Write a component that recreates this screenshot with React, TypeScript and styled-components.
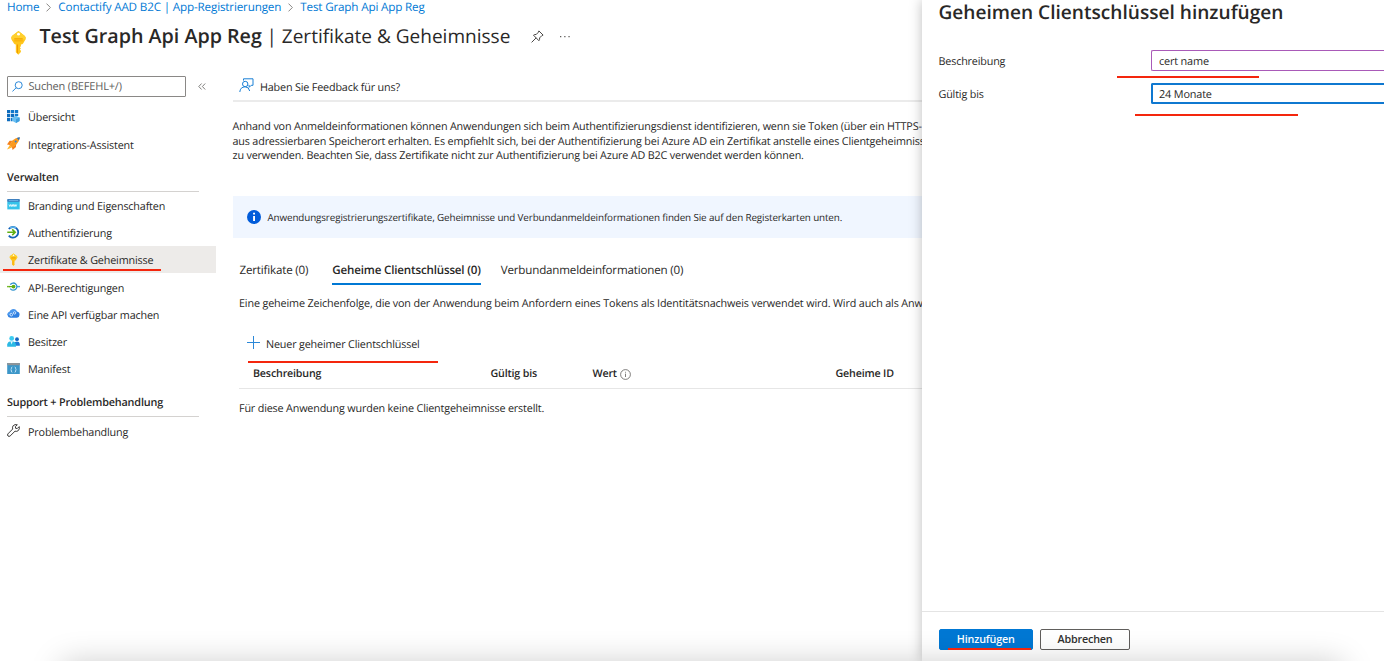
import React from "react";
import styled, { createGlobalStyle, css } from "styled-components";

const Global = createGlobalStyle`
  * { box-sizing: border-box; }
  html, body { margin: 0; height: 100%; overflow: hidden; background: #fff; }
  body {
    font-family: "Open Sans", "Noto Sans", sans-serif;
    font-size: 10.8px;
    letter-spacing: -0.175px;
    color: #292827;
    text-rendering: geometricPrecision;
  }
  svg { display: block; flex: none; }
`;

const Page = styled.div`
  position: relative;
  height: 661px;
  display: grid;
  grid-template-columns: minmax(0, 1fr) 462px;
  overflow: hidden;
`;
const Blade = styled.div`
  min-width: 0;
  overflow: hidden;
  white-space: nowrap;
`;
const Crumbs = styled.nav`
  display: flex;
  align-items: center;
  height: 15px;
  padding: 0 0 1px 7px;
  font-size: 11.7px;
  color: #0078d4;
`;
const Chevron = styled.svg`
  margin: 1px 7px 0 7px;
`;
const TitleBar = styled.header`
  display: flex;
  align-items: center;
  height: 61px;
  padding: 0 0 19px 8px;
`;
const KeySlot = styled.div`
  padding-top: 12px;
`;
const Title = styled.h1`
  margin: 0 0 0 10.5px;
  display: flex;
  align-items: baseline;
  font-size: 19.7px;
  letter-spacing: 0;
  font-weight: 600;
  line-height: 26px;
`;
const Subtitle = styled.span`
  margin-left: 4.5px;
  font-size: 19.05px;
  font-weight: 400;
`;
const TitleIcons = styled.div`
  display: flex;
  align-items: center;
  gap: 15px;
  margin-left: 21px;
`;
const Columns = styled.div`
  display: flex;
  gap: 17px;
`;
const Sidebar = styled.aside`
  width: 215.5px;
  flex: none;
`;
const SearchRow = styled.div`
  display: flex;
  align-items: center;
  gap: 12px;
  height: 27px;
  padding: 0 0 6.5px 7px;
`;
const SearchBox = styled.div`
  display: flex;
  align-items: center;
  gap: 5.5px;
  width: 179px;
  height: 20.5px;
  padding: 1px 0 0 4px;
  border: 1px solid #8a8886;
  border-radius: 1px;
  color: #605e5c;
  font-size: 11px;

  svg { margin-bottom: 1.5px; }
`;
const NavItem = styled.a<{ $active?: boolean }>`
  position: relative;
  display: flex;
  align-items: center;
  gap: 8px;
  height: 27.25px;
  padding: 2.3px 0 0 7px;
  ${(p) => p.$active && css`background: #edebe9;`}

  svg { margin-bottom: 2.6px; }
`;
const NavHeading = styled.h2`
  display: flex;
  align-items: flex-end;
  margin: 0 17px 0 7px;
  height: 34px;
  padding-bottom: 6px;
  border-bottom: 1px solid #d4d2d0;
  font-size: 10.85px;
  line-height: 14px;
  font-weight: 600;

  &:nth-of-type(2) { margin-top: 1.2px; }
`;
const Main = styled.main`
  flex: 1;
  min-width: 0;
`;
const CommandBar = styled.div`
  display: flex;
  align-items: flex-start;
  gap: 6px;
  height: 26px;
  padding: 2px 0 0 6.5px;
  border-bottom: 2px solid #ebebeb;
  line-height: 19px;
`;
const Intro = styled.p`
  margin: 18px 0 0;
  line-height: 14.5px;
`;
const Notice = styled.div`
  display: flex;
  align-items: center;
  gap: 7px;
  height: 42px;
  margin-top: 32.5px;
  padding-left: 14px;
  background: #f0f6ff;
  font-size: 9.85px;
  letter-spacing: -0.122px;
`;
const Tabs = styled.div`
  display: flex;
  margin: 21px 0 0 7px;
  height: 26px;
`;
const Tab = styled.div<{ $active?: boolean }>`
  height: 26px;
  font-size: 11.6px;
  line-height: 24px;
  margin-right: ${(p) => (p.$active ? "20px" : "24px")};
  border-bottom: 2px solid ${(p) => (p.$active ? "#0078d4" : "transparent")};
  font-weight: ${(p) => (p.$active ? 600 : 400)};
`;
const Description = styled.p`
  margin: 11px 0 0 6.5px;
  line-height: 15px;
  letter-spacing: -0.15px;
`;
const AddSecret = styled.div`
  position: relative;
  display: flex;
  align-items: center;
  gap: 6.5px;
  margin: 22px 0 0 14px;
  height: 22px;
  padding-top: 1.5px;

  svg { margin-bottom: 4px; }
`;
const TableHead = styled.div`
  display: grid;
  grid-template-columns: 237.5px 102px 243px 1fr;
  align-items: center;
  margin: 4px 0 0 6.5px;
  height: 30px;
  padding: 1px 0 0 14px;
  border-bottom: 1px solid #e6e6e6;
  font-size: 10.7px;
  font-weight: 600;
`;
const HeadCell = styled.span`
  display: flex;
  align-items: center;
  gap: 3.5px;
`;
const Empty = styled.p`
  margin: 12px 0 0 6.5px;
  line-height: 15px;
`;
const Panel = styled.section`
  position: relative;
  display: flex;
  flex-direction: column;
  background: #fff;
  box-shadow: 0 0 12px rgba(0, 0, 0, 0.26);
  white-space: nowrap;
`;
const PanelTitle = styled.h2`
  margin: 0 0 25px 16.5px;
  font-size: 19.1px;
  letter-spacing: 0;
  line-height: 25px;
  font-weight: 600;
`;
const Field = styled.div`
  position: relative;
  display: grid;
  grid-template-columns: 212.5px 1fr;
  align-items: center;
  margin: 0 0 12.2px 16.5px;
  height: 21px;
`;
const FieldLabel = styled.label`
  padding-top: 1.5px;
`;
const Input = styled.div<{ $focused?: boolean }>`
  display: flex;
  align-items: center;
  height: 21px;
  padding: 1.5px 0 0 ${(p) => (p.$focused ? "6px" : "7px")};
  border: ${(p) => (p.$focused ? "2px solid #0f78d0" : "1px solid #a95ab8")};
  border-right: 0;
  border-radius: 2px 0 0 2px;
  font-size: 10.9px;
`;
const PanelFooter = styled.footer`
  display: flex;
  gap: 7px;
  margin-top: auto;
  height: 50px;
  padding: 17px 0 0 16.5px;
  border-top: 1px solid #e4e4e4;
`;
const Button = styled.button<{ $primary?: boolean }>`
  position: relative;
  width: ${(p) => (p.$primary ? "94.5px" : "90px")};
  height: 21px;
  padding: 0 0 1px;
  border: 1px solid ${(p) => (p.$primary ? "#0078d4" : "#605e5c")};
  border-radius: 2px;
  background: ${(p) => (p.$primary ? "#0078d4" : "transparent")};
  color: ${(p) => (p.$primary ? "#fff" : "#323130")};
  font: 600 10.75px/18px "Open Sans", "Noto Sans", sans-serif;
  letter-spacing: -0.18px;
`;
/* hand-drawn emphasis line lying over the interface */
const Mark = styled.i<{ $x: number; $y: number; $w: number }>`
  position: absolute;
  z-index: 2;
  left: ${(p) => p.$x}px;
  top: ${(p) => p.$y}px;
  width: ${(p) => p.$w}px;
  height: 2px;
  background: #f4260d;
`;
const BottomShade = styled.div`
  position: absolute;
  left: 62px;
  right: 42px;
  top: 663px;
  height: 40px;
  box-shadow: 0 0 32px rgba(0, 0, 0, 0.21);
  pointer-events: none;
`;

const Key = ({ w, h }: { w: number; h: number }) => (
  <svg width={w} height={h} viewBox="0 0 16 26">
    <path d="M8 1 1.2 6.2Q-.2 8 1 10.3L3.3 14Q4 15 5.2 15V23.2L7.8 25.8 10.5 23V21.5L9.4 20.3 10.5 19.2 9.4 18 10.5 16.8V15Q12 15 12.8 14L15.2 10Q16 7.5 14.6 6.2Z" fill="#ffc61a" />
    <path d="M8 1 1.2 6.2Q-.2 8 1 10H15.2Q16 7.5 14.6 6.2Z" fill="#ffd02e" />
    <path d="M6.4 15H7.5V24.5L6.4 23.7Z" fill="#f09a00" />
    <path d="M3.6 8.6h8.8v1.2H3.6zM3.6 10.8h8.8v1H3.6z" fill="#f5a300" />
    <circle cx="8" cy="4.3" r="1.5" fill="#fff" />
  </svg>
);

const GridIcon = () => (
  <svg width="13" height="13" viewBox="0 0 13 13">
    <path d="M0 0h3.3v3.3H0zM0 4h3.3v3.3H0zM0 8h3.3v3.2H0zM4 4h3.3v3.3H4z" fill="#0f6cbd" />
    <path d="M4 0h3.3v3.3H4zM8 0h3.2v3.3H8zM8 4h3.2v2H8zM4 8h1.6v3.2H4z" fill="#1178cc" />
    <path d="M9 5.8 12.6 7.6V11L9 12.9 5.5 11V7.6Z" fill="#69bff2" />
    <path d="M9 9.3 12.6 7.6V11L9 12.9Z" fill="#3e9ede" />
  </svg>
);
const RocketIcon = () => (
  <svg width="13" height="13" viewBox="0 0 13 13">
    <path d="M5.4 3.8H2.6L0 7.4l3 .6ZM9 7.4v2.6L5.6 13l-.7-3Z" fill="#f4801b" />
    <path d="M2.7 8.2 0 12.6 4.9 10.4Z" fill="#ffb52b" />
    <path d="M12.8.2Q8.5.6 5.4 3.6L2.5 8.2 4.9 10.5 9.2 7.7Q12.5 4.5 12.8.2Z" fill="#fb9a1e" />
    <path d="M12.8.2Q11.3.3 9.8 1L12 3.2Q12.7 1.7 12.8.2Z" fill="#1f72c9" />
    <circle cx="8.7" cy="4.4" r="1" fill="#2f7dd0" />
  </svg>
);
const BrandIcon = () => (
  <svg width="13" height="13" viewBox="0 0 13 13">
    <path d="M.3 1.2h12.4v2.6H.3z" fill="#0f62b0" />
    <path d="M1.5 2.2h10v.8h-10z" fill="#7fc1ee" />
    <path d="M.3 3.8h12.4v7.6H.3z" fill="#35c3ea" />
    <path d="M2 6.5l.8 2 .8-2 .8 2 .8-2 .7 2 .7-2 .7 2 .8-2 .8 2 .8-2" fill="none" stroke="#fff" strokeWidth=".8" />
  </svg>
);
const AuthIcon = () => (
  <svg width="13" height="13" viewBox="0 0 13 13">
    <path d="M1.8 3A5.3 5.3 0 1 1 1.8 9.6" fill="none" stroke="#1563b8" strokeWidth="1.8" />
    <path d="M3 2.2A5 5 0 0 1 9 2" fill="none" stroke="#5ab4ec" strokeWidth="1.6" />
    <path d="M.3 6.3H8M5.2 3.4 8.2 6.3 5.2 9.2" fill="none" stroke="#5fae12" strokeWidth="1.6" />
  </svg>
);
const ApiIcon = () => (
  <svg width="13" height="13" viewBox="0 0 13 13">
    <path d="M0 5.9h3v1.4H0z" fill="#76b82a" />
    <path d="M10 5.9h3v1.4h-3z" fill="#4aa9de" />
    <path d="M3.3 4.6A3.6 3.6 0 1 1 3.3 8.6" fill="none" stroke="#3596cf" strokeWidth="1.3" />
    <circle cx="6.5" cy="6.6" r="1.9" fill="#5fae12" />
    <path d="M2 6h4v1.2H2z" fill="#5fae12" />
  </svg>
);
const CloudIcon = () => (
  <svg width="13" height="13" viewBox="0 0 13 13">
    <path d="M3.3 10.8A3.1 3.1 0 0 1 2.6 4.8 4 4 0 0 1 10 4.5 3.2 3.2 0 0 1 9.9 10.8Z" fill="#2f7fe0" />
    <path d="M2.6 4.8A4 4 0 0 1 10 4.5Q6 4 5 6.5T.3 8Q.2 5.5 2.6 4.8Z" fill="#4a98ee" />
    <g fill="none" stroke="#dcecff" strokeWidth=".9">
      <circle cx="4.3" cy="7.7" r="1.3" />
      <circle cx="7.6" cy="5.9" r="1.2" />
    </g>
  </svg>
);
const PeopleIcon = () => (
  <svg width="13" height="13" viewBox="0 0 13 13">
    <circle cx="10" cy="4.2" r="1.9" fill="#1566c0" />
    <path d="M7.3 10.8V9Q7.6 6.6 10 6.6T12.8 9V10.8Z" fill="#1a78d6" />
    <circle cx="4.7" cy="3.4" r="2.4" fill="#3ccbf0" />
    <path d="M.2 11.8V9.6Q.6 6.2 4.6 6.2T9 9.6V11.8Z" fill="#2cb9e4" />
    <path d="M3.4 6.3h2.4L4.6 9.4Z" fill="#e3f8ff" />
  </svg>
);
const ManifestIcon = () => (
  <svg width="13" height="13" viewBox="0 0 13 13">
    <path d="M.2 1h12.6v11H.2z" fill="#3c96c8" />
    <path d="M.2 1h12.6v2.2H.2z" fill="#8d9499" />
    <path d="M5.3 5Q4.2 5.2 4.4 6.5 4.4 7.5 3.8 7.7 4.4 7.9 4.4 9 4.2 10.2 5.3 10.3M7.7 5Q8.8 5.2 8.6 6.5 8.6 7.5 9.2 7.7 8.6 7.9 8.6 9 8.8 10.2 7.7 10.3" fill="none" stroke="#cfeafa" strokeWidth=".9" />
  </svg>
);
const WrenchIcon = () => (
  <svg width="13" height="13" viewBox="0 0 13 13">
    <path d="M12.2 2.6 10.3 4.5 8.6 4.3 8.4 2.6 10.3.8Q7.8 0 6.2 1.7 5.1 3 5.7 5L.9 9.9Q.1 11 1 12 2.1 12.9 3.1 12L8 7.2Q9.9 7.8 11.3 6.6 12.9 4.9 12.2 2.6Z" fill="none" stroke="#3b3a39" strokeWidth="1" />
  </svg>
);
const SearchIcon = () => (
  <svg width="11" height="11" viewBox="0 0 11 11">
    <g fill="none" stroke="#2b88d8">
      <circle cx="6.7" cy="4.2" r="3.5" />
      <path d="M4.2 6.7.4 10.5" />
    </g>
  </svg>
);
const FeedbackIcon = () => (
  <svg width="15" height="15" viewBox="0 0 15 15">
    <g fill="none" stroke="#1a80d6" strokeWidth="1">
      <path d="M4.5 2.6V.8H14V7.3H12.2L10.2 9.3V7.3H9.6" />
      <circle cx="6.2" cy="6" r="2.7" />
      <path d="M.8 14Q1.2 9 6.2 8.8 10 9 10.7 13" />
    </g>
  </svg>
);
const PinIcon = () => (
  <svg width="13" height="13" viewBox="0 0 13 13">
    <path d="M7.9.9 12.1 5.1 10.9 5.6 8.6 7.9Q8.9 9.6 7.9 10.7L2.5 5.2Q3.6 4.2 5.2 4.5L7.4 2.2ZM5.1 7.9.6 12.4" fill="none" stroke="#484644" />
  </svg>
);
const CrumbChevron = () => (
  <Chevron width="5" height="9" viewBox="0 0 5 9">
    <path d="M.5.6 4.4 4.5.5 8.4" fill="none" stroke="#8a8886" />
  </Chevron>
);
const Collapse = () => (
  <svg width="8" height="7" viewBox="0 0 8 7">
    <path d="M3.6.5.8 3.5 3.6 6.5M7.2.5 4.4 3.5 7.2 6.5" fill="none" stroke="#605e5c" strokeWidth=".8" />
  </svg>
);

export default function App() {
  return (
    <>
      <Global />
      <Page>
        <Blade>
          <Crumbs>
            <span>Home</span>
            <CrumbChevron />
            <span>Contactify AAD B2C | App-Registrierungen</span>
            <CrumbChevron />
            <span>Test Graph Api App Reg</span>
          </Crumbs>
          <TitleBar>
            <KeySlot><Key w={21} h={25} /></KeySlot>
            <Title>
              Test Graph Api App Reg
              <Subtitle>| Zertifikate &amp; Geheimnisse</Subtitle>
            </Title>
            <TitleIcons>
              <PinIcon />
              <svg width="12" height="3" viewBox="0 0 12 3">
                <path d="M1 1h1.3v1.3H1zM5.2 1h1.3v1.3H5.2zM9.4 1h1.3v1.3H9.4z" fill="#605e5c" />
              </svg>
            </TitleIcons>
          </TitleBar>
          <Columns>
            <Sidebar>
              <SearchRow>
                <SearchBox><SearchIcon />Suchen (BEFEHL+/)</SearchBox>
                <Collapse />
              </SearchRow>
              <NavItem><GridIcon />Übersicht</NavItem>
              <NavItem><RocketIcon />Integrations-Assistent</NavItem>
              <NavHeading>Verwalten</NavHeading>
              <NavItem><BrandIcon />Branding und Eigenschaften</NavItem>
              <NavItem><AuthIcon />Authentifizierung</NavItem>
              <NavItem $active>
                <Key w={13} h={13} />Zertifikate &amp; Geheimnisse
                <Mark $x={3} $y={23} $w={158} />
              </NavItem>
              <NavItem><ApiIcon />API-Berechtigungen</NavItem>
              <NavItem><CloudIcon />Eine API verfügbar machen</NavItem>
              <NavItem><PeopleIcon />Besitzer</NavItem>
              <NavItem><ManifestIcon />Manifest</NavItem>
              <NavHeading>Support + Problembehandlung</NavHeading>
              <NavItem><WrenchIcon />Problembehandlung</NavItem>
            </Sidebar>
            <Main>
              <CommandBar><FeedbackIcon />Haben Sie Feedback für uns?</CommandBar>
              <Intro>
                Anhand von Anmeldeinformationen können Anwendungen sich beim Authentifizierungsdienst identifizieren, wenn sie Token (über ein HTTPS-<br />
                aus adressierbaren Speicherort erhalten. Es empfiehlt sich, bei der Authentifizierung bei Azure AD ein Zertifikat anstelle eines Clientgeheimniss<br />
                zu verwenden. Beachten Sie, dass Zertifikate nicht zur Authentifizierung bei Azure AD B2C verwendet werden können.
              </Intro>
              <Notice>
                <svg width="14" height="14" viewBox="0 0 14 14">
                  <circle cx="7" cy="7" r="7" fill="#015cda" />
                  <path d="M6.1 5.9h1.9v5H6.1zM6.1 2.8h1.9v1.8H6.1z" fill="#fff" />
                </svg>
                Anwendungsregistrierungszertifikate, Geheimnisse und Verbundanmeldeinformationen finden Sie auf den Registerkarten unten.
              </Notice>
              <Tabs>
                <Tab>Zertifikate (0)</Tab>
                <Tab $active>Geheime Clientschlüssel (0)</Tab>
                <Tab>Verbundanmeldeinformationen (0)</Tab>
              </Tabs>
              <Description>
                Eine geheime Zeichenfolge, die von der Anwendung beim Anfordern eines Tokens als Identitätsnachweis verwendet wird. Wird auch als Anw
              </Description>
              <AddSecret>
                <svg width="13" height="13" viewBox="0 0 13 13">
                  <path d="M6.5 0V13M0 6.5H13" stroke="#2b88d8" />
                </svg>
                Neuer geheimer Clientschlüssel
                <Mark $x={1.5} $y={28} $w={190} />
              </AddSecret>
              <TableHead>
                <HeadCell>Beschreibung</HeadCell>
                <HeadCell>Gültig bis</HeadCell>
                <HeadCell>
                  Wert
                  <svg width="11" height="11" viewBox="0 0 11 11">
                    <circle cx="5.5" cy="5.5" r="4.9" fill="none" stroke="#605e5c" strokeWidth=".8" />
                    <path d="M5.5 4.6V8M5.5 2.8V3.7" stroke="#605e5c" strokeWidth=".8" />
                  </svg>
                </HeadCell>
                <HeadCell>Geheime ID</HeadCell>
              </TableHead>
              <Empty>Für diese Anwendung wurden keine Clientgeheimnisse erstellt.</Empty>
            </Main>
          </Columns>
        </Blade>
        <Panel>
          <PanelTitle>Geheimen Clientschlüssel hinzufügen</PanelTitle>
          <Field>
            <FieldLabel>Beschreibung</FieldLabel>
            <Input>cert name</Input>
            <Mark $x={178.5} $y={26} $w={142} />
          </Field>
          <Field>
            <FieldLabel>Gültig bis</FieldLabel>
            <Input $focused>24 Monate</Input>
            <Mark $x={196.5} $y={31} $w={163} />
          </Field>
          <PanelFooter>
            <Button $primary>
              Hinzufügen
              <Mark $x={8.5} $y={18} $w={83} />
            </Button>
            <Button>Abbrechen</Button>
          </PanelFooter>
        </Panel>
        <BottomShade />
      </Page>
    </>
  );
}
